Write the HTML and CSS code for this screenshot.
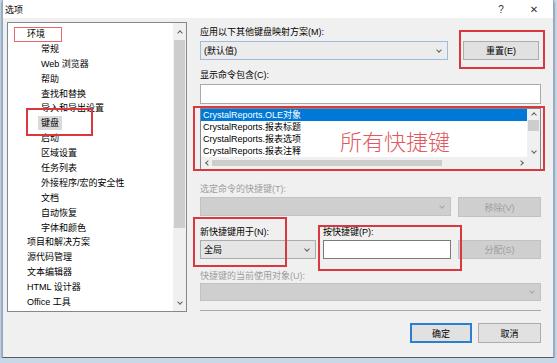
FILE: index.html
```html
<!DOCTYPE html>
<html lang="zh-CN">
<head>
  <meta charset="UTF-8">
  <title>选项</title>
  <link rel="stylesheet" href="styles.css">
</head>
<body>

  <div class="window">
    <div class="titlebar">
      <span class="title">选项</span>
      <span class="help">?</span>
      <span class="close">✕</span>
    </div>

    <div class="content">
      <div class="tree">
        <ul class="tree-list">
          <li class="top">环境</li>
          <li class="child">常规</li>
          <li class="child">Web 浏览器</li>
          <li class="child">帮助</li>
          <li class="child">查找和替换</li>
          <li class="child">导入和导出设置</li>
          <li class="child"><span class="current">键盘</span></li>
          <li class="child">启动</li>
          <li class="child">区域设置</li>
          <li class="child">任务列表</li>
          <li class="child">外接程序/宏的安全性</li>
          <li class="child">文档</li>
          <li class="child">自动恢复</li>
          <li class="child">字体和颜色</li>
          <li class="top">项目和解决方案</li>
          <li class="top">源代码管理</li>
          <li class="top">文本编辑器</li>
          <li class="top">HTML 设计器</li>
          <li class="top">Office 工具</li>
        </ul>
        <div class="vscroll">
          <div class="arrow"><i class="chev up"></i></div>
          <div class="thumb"></div>
          <div class="track"></div>
          <div class="arrow"><i class="chev down"></i></div>
        </div>
      </div>

      <div class="panel">
        <div class="label">应用以下其他键盘映射方案(M):</div>
        <div class="row-scheme">
          <div class="combo combo-scheme"><span>(默认值)</span><i class="chev down"></i></div>
          <button class="btn btn-reset">重置(E)</button>
        </div>

        <div class="label gap-c">显示命令包含(C):</div>
        <div class="textbox"></div>

        <div class="listbox">
          <div class="list-main">
            <ul class="list-items">
              <li class="sel">CrystalReports.OLE对象</li>
              <li>CrystalReports.报表标题</li>
              <li>CrystalReports.报表选项</li>
              <li>CrystalReports.报表注释</li>
            </ul>
            <div class="list-vscroll">
              <div class="arrow-s"><i class="chev up"></i></div>
              <div class="thumb-s"></div>
              <div class="track"></div>
              <div class="arrow-s"><i class="chev down"></i></div>
            </div>
          </div>
          <div class="list-hscroll">
            <div class="arrow-h"><i class="chev left"></i></div>
            <div class="thumb-h"></div>
            <div class="track"></div>
            <div class="arrow-h"><i class="chev right"></i></div>
            <div class="corner"></div>
          </div>
        </div>

        <div class="label disabled gap-t">选定命令的快捷键(T):</div>
        <div class="grid grid-t">
          <div class="combo combo-off wide"><span></span><i class="chev down"></i></div>
          <button class="btn btn-off">移除(V)</button>
        </div>

        <div class="grid grid-np">
          <div class="label">新快捷键用于(N):</div>
          <div class="label">按快捷键(P):</div>
          <div></div>
          <div class="combo combo-scope"><span>全局</span><i class="chev down"></i></div>
          <div class="keybox"></div>
          <button class="btn btn-off">分配(S)</button>
        </div>

        <div class="label disabled gap-u">快捷键的当前使用对象(U):</div>
        <div class="combo combo-off combo-used"><span></span><i class="chev down"></i></div>

        <div class="separator"></div>

        <div class="actions">
          <button class="btn btn-ok">确定</button>
          <button class="btn btn-cancel">取消</button>
        </div>
      </div>
    </div>

    <!-- red annotation boxes drawn over the dialog -->
    <div class="mark mark-env"></div>
    <div class="mark mark-kbd"></div>
    <div class="mark mark-reset"></div>
    <div class="mark mark-list"></div>
    <div class="mark mark-scope"></div>
    <div class="mark mark-press"></div>
    <div class="note">所有快捷键</div>
  </div>

</body>
</html>
```

FILE: styles.css
```css
body {
  margin: 0;
  background: #c8d8e9;
  font-family: "Liberation Sans", "Noto Sans CJK SC", sans-serif;
  font-size: 9px;
  color: #000;
}

.window {
  position: relative;
  margin-left: 2px;
  width: 550px;
  height: 357px;
  background: #f0f0f0;
  border-left: 1px solid #8fa9c6;
  border-right: 1px solid #8fa9c6;
  border-bottom: 1px solid #5a5a5a;
  box-shadow: 0 2px 2px rgba(0, 0, 0, 0.6);
}

.titlebar {
  height: 18px;
  background: #fff;
  display: flex;
  align-items: center;
  padding-left: 2px;
}

.help {
  margin-left: auto;
  width: 12px;
  text-align: center;
  font-size: 10px;
  color: #333;
}

.close {
  width: 14px;
  margin-left: 20px;
  margin-right: 12px;
  text-align: center;
  font-family: "DejaVu Sans", sans-serif;
  font-size: 10px;
  color: #333;
}

.content {
  display: flex;
  height: 339px;
}

/* left tree */

.tree {
  box-sizing: border-box;
  margin: 4px 0 0 4px;
  width: 180px;
  height: 290px;
  border: 1px solid #828790;
  background: #fff;
  display: flex;
}

.tree-list {
  flex: 1;
  list-style: none;
  margin: 0;
  padding: 4px 0 0;
}

.tree-list li {
  height: 14.9px;
  line-height: 14.9px;
  white-space: nowrap;
}

.tree-list .top {
  padding-left: 19px;
}

.tree-list .child {
  padding-left: 33px;
}

.current {
  background: #dadada;
  padding: 2px 3px;
  margin-left: -3px;
}

.vscroll {
  width: 13px;
  background: #f0f0f0;
  display: flex;
  flex-direction: column;
}

.arrow {
  height: 17px;
  display: flex;
  align-items: center;
  justify-content: center;
}

.thumb {
  height: 188px;
  margin: 0 1px;
  background: #cdcdcd;
}

.track {
  flex: 1;
}

.chev {
  display: inline-block;
  width: 3px;
  height: 3px;
  border-right: 1px solid #606060;
  border-bottom: 1px solid #606060;
}

.chev.down { transform: translateY(-1px) rotate(45deg); }
.chev.up { transform: translateY(1px) rotate(-135deg); }
.chev.left { transform: translateX(1px) rotate(135deg); }
.chev.right { transform: translateX(-1px) rotate(-45deg); }

/* right panel */

.panel {
  margin-left: 13px;
  width: 341px;
  padding-top: 7px;
}

.label {
  height: 14px;
  line-height: 14px;
  white-space: nowrap;
}

.label.disabled {
  color: #9d9d9d;
}

.row-scheme {
  display: flex;
  margin-top: 2px;
}

.combo {
  box-sizing: border-box;
  display: flex;
  align-items: center;
  justify-content: space-between;
  padding: 0 6px 0 3px;
  border: 1px solid #acacac;
}

.combo-scheme {
  width: 248px;
  height: 19px;
  background: #ececec;
  border-color: #9dbbdc;
}

.btn {
  box-sizing: border-box;
  padding: 0;
  font: inherit;
  color: #000;
  background: #e1e1e1;
  border: 1px solid #adadad;
  height: 19px;
}

.btn-reset {
  width: 76px;
  margin-left: 15px;
}

.gap-c {
  margin-top: 8px;
}

.textbox {
  box-sizing: border-box;
  margin-top: 2px;
  height: 20px;
  background: #fff;
  border: 1px solid #a9a9a9;
}

.listbox {
  box-sizing: border-box;
  margin-top: 4px;
  height: 62px;
  background: #fff;
  border: 1px solid #828790;
}

.list-main {
  display: flex;
  height: 48px;
}

.list-items {
  flex: 1;
  list-style: none;
  margin: 0;
  padding: 0;
}

.list-items li {
  height: 12px;
  line-height: 12px;
  padding-left: 2px;
  white-space: nowrap;
}

.list-items .sel {
  background: #0078d7;
  color: #fff;
}

.list-vscroll {
  width: 13px;
  background: #f0f0f0;
  display: flex;
  flex-direction: column;
}

.arrow-s {
  height: 10px;
  display: flex;
  align-items: center;
  justify-content: center;
}

.thumb-s {
  height: 11px;
  margin: 1px 1px 0;
  background: #cdcdcd;
}

.list-hscroll {
  display: flex;
  height: 12px;
  background: #f0f0f0;
}

.arrow-h {
  width: 11px;
  display: flex;
  align-items: center;
  justify-content: center;
}

.thumb-h {
  width: 230px;
  height: 6px;
  margin-top: 3px;
  background: #cdcdcd;
}

.list-hscroll .arrow-h:last-of-type {
  width: 13px;
}

.corner {
  width: 13px;
}

.gap-t {
  margin-top: 12px;
}

.grid {
  display: grid;
  grid-template-columns: 116px 128px 83px;
  column-gap: 7px;
}

.grid-t {
  margin-top: 1px;
}

.grid-t .wide {
  grid-column: 1 / 3;
  height: 19px;
}

.grid-t .btn {
  height: 20px;
}

.combo-off {
  background: #cfcfcf;
  border-color: #c2c2c2;
}

.combo-off .chev {
  border-color: #a8a8a8;
}

.btn-off {
  background: #cfcfcf;
  border-color: #c2c2c2;
  color: #9d9d9d;
}

.grid-np {
  margin-top: 8px;
  row-gap: 1px;
}

.combo-scope {
  height: 19px;
  background: #e5e5e5;
}

.keybox {
  box-sizing: border-box;
  height: 19px;
  background: #fff;
  border: 1px solid #7a7a7a;
}

.gap-u {
  margin-top: 10px;
}

.combo-used {
  height: 18px;
}

.separator {
  margin-top: 9px;
  border-top: 1px solid #a9a9a9;
}

.actions {
  display: flex;
  justify-content: flex-end;
  gap: 6px;
  margin-top: 12px;
}

.actions .btn {
  height: 20px;
}

.btn-ok {
  width: 62px;
  border: 2px solid #2a7fd0;
}

.btn-cancel {
  width: 63px;
}

/* annotation overlay */

.mark {
  position: absolute;
  box-sizing: border-box;
  border: 2px solid #d9393e;
}

.mark-env {
  left: 11px;
  top: 27px;
  width: 48px;
  height: 15px;
  border: 1px solid #e26a6e;
}

.mark-kbd {
  left: 23px;
  top: 108px;
  width: 67px;
  height: 28px;
}

.mark-reset {
  left: 456px;
  top: 30px;
  width: 86px;
  height: 39px;
}

.mark-list {
  left: 190px;
  top: 106px;
  width: 352px;
  height: 65px;
}

.mark-scope {
  left: 190px;
  top: 217px;
  width: 94px;
  height: 50px;
}

.mark-press {
  left: 315px;
  top: 225px;
  width: 144px;
  height: 46px;
}

.note {
  position: absolute;
  left: 337px;
  top: 132px;
  font-size: 22px;
  line-height: 22px;
  font-weight: 300;
  color: #e0595e;
  white-space: nowrap;
}
```
